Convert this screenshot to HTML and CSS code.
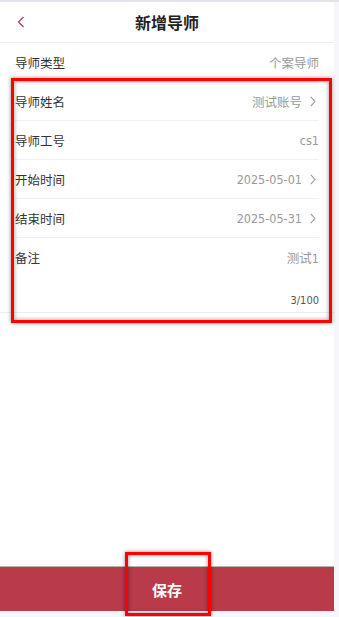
FILE: index.html
```html
<!DOCTYPE html>
<html lang="zh">
<head>
<meta charset="utf-8">
<title>新增导师</title>
<link rel="stylesheet" href="styles.css">
</head>
<body>
<div class="screen">
  <div class="app">
    <header class="header">
      <span class="back">
        <svg width="8" height="12" viewBox="0 0 8 12"><path d="M6.5 1 L1.5 6 L6.5 11" fill="none" stroke="#b93b49" stroke-width="1.2"/></svg>
      </span>
      <h1 class="title">新增导师</h1>
      <span></span>
    </header>
    <div class="row"><span class="label">导师类型</span><span class="value">个案导师</span></div>
    <section class="form">
      <div class="row"><span class="label">导师姓名</span><span class="value">测试账号<svg class="chev" width="6" height="11" viewBox="0 0 6 11"><path d="M0.8 0.8 L5 5.5 L0.8 10.2" fill="none" stroke="#999" stroke-width="1.1"/></svg></span></div>
      <div class="row"><span class="label">导师工号</span><span class="value">cs1</span></div>
      <div class="row"><span class="label">开始时间</span><span class="value">2025-05-01<svg class="chev" width="6" height="11" viewBox="0 0 6 11"><path d="M0.8 0.8 L5 5.5 L0.8 10.2" fill="none" stroke="#999" stroke-width="1.1"/></svg></span></div>
      <div class="row"><span class="label">结束时间</span><span class="value">2025-05-31<svg class="chev" width="6" height="11" viewBox="0 0 6 11"><path d="M0.8 0.8 L5 5.5 L0.8 10.2" fill="none" stroke="#999" stroke-width="1.1"/></svg></span></div>
      <div class="remark">
        <div class="remark-head"><span class="label">备注</span><span class="value">测试1</span></div>
        <div class="counter">3/100</div>
      </div>
    </section>
    <div class="spacer"></div>
    <footer class="footer"><button class="save">保存</button></footer>
  </div>
  <div class="mark mark-form"></div>
  <div class="mark mark-save"></div>
</div>
</body>
</html>
```
FILE: styles.css
```css
* { box-sizing: border-box; }
html, body { margin: 0; padding: 0; }
body {
  background: #f7f7fb;
  font-family: "DejaVu Sans Condensed", "Noto Sans CJK SC", sans-serif;
  font-stretch: condensed;
  color: #333;
}
.screen {
  position: relative;
  width: 339px;
  height: 617px;
  border-top: 2px solid #e3e3ea;
}
.app {
  width: 334px;
  height: 609px;
  background: #fff;
  display: flex;
  flex-direction: column;
}
.header {
  height: 41px;
  border-bottom: 1px solid #eeeeee;
  display: grid;
  grid-template-columns: 50px 1fr 50px;
  align-items: center;
}
.back { padding-left: 17px; display: flex; align-items: center; }
.title {
  margin: 0;
  text-align: center;
  font-size: 16px;
  font-weight: 700;
  color: #222;
}
.row {
  margin: 0 15px;
  height: 39px;
  border-bottom: 1px solid #f0f0f0;
  display: flex;
  align-items: center;
  justify-content: space-between;
  font-size: 12.5px;
}
.label { color: #333; }
.value {
  color: #999;
  display: flex;
  align-items: center;
}
.chev {
  display: block;
  margin-left: 8px;
  margin-right: 3px;
}
.form { border-bottom: 1px solid #eeeeee; }
.remark { padding: 0 15px 3px; }
.remark-head {
  height: 38px;
  display: flex;
  align-items: center;
  justify-content: space-between;
  font-size: 12.5px;
}
.counter {
  margin-top: 17px;
  height: 16px;
  line-height: 16px;
  text-align: right;
  font-size: 11px;
  color: #555;
}
.spacer { flex: 1; }
.footer {
  border-top: 1px solid #b5b5b5;
}
.save {
  display: block;
  width: 100%;
  height: 44px;
  border: 0;
  margin: 0;
  background: #b93b49;
  color: #fff;
  font-family: inherit;
  font-size: 15px;
  font-weight: 700;
}
.mark {
  position: absolute;
  border: 3px solid #ff0000;
  box-shadow: 0 0 4px rgba(0,0,0,0.45), inset 0 0 4px rgba(0,0,0,0.45);
}
.mark-form { left: 11px; top: 76px; width: 321px; height: 245px; }
.mark-save { left: 125px; top: 550px; width: 86px; height: 64px; }
```
